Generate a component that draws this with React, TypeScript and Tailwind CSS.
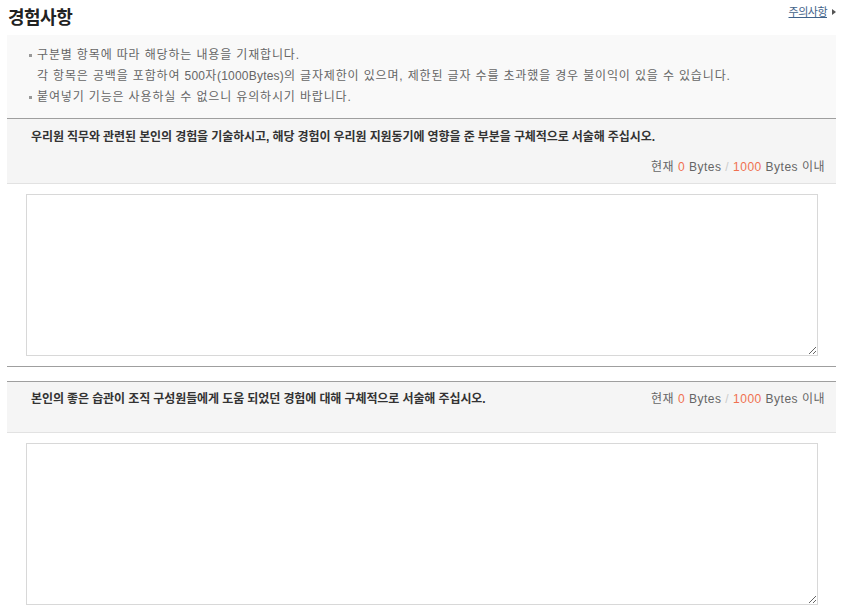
import type { ReactNode } from "react";

const FONT = "font-['Liberation_Sans','Noto_Sans_CJK_KR',sans-serif]";

const notices: { lines: ReactNode[] }[] = [
  {
    lines: [
      "구분별 항목에 따라 해당하는 내용을 기재합니다.",
      <>
        각 항목은 공백을 포함하여{" "}
        <span className="tracking-[0.2px]">500</span>자
        <span className="tracking-[0.2px]">(1000Bytes)</span>의 글자제한이 있으며, 제한된 글자 수를 초과했을 경우 불이익이 있을 수 있습니다.
      </>,
    ],
  },
  { lines: ["붙여넣기 기능은 사용하실 수 없으니 유의하시기 바랍니다."] },
];

const questions = [
  {
    text: "우리원 직무와 관련된 본인의 경험을 기술하시고, 해당 경험이 우리원 지원동기에 영향을 준 부분을 구체적으로 서술해 주십시오.",
    stacked: true,
  },
  {
    text: "본인의 좋은 습관이 조직 구성원들에게 도움 되었던 경험에 대해 구체적으로 서술해 주십시오.",
    stacked: false,
  },
];

function ByteCounter() {
  return (
    <span className="whitespace-nowrap tracking-[0.5px] text-[#666]">
      현재 <span className="text-[#f0704f]">0</span> Bytes{" "}
      <span className="text-[#cccccc]">/</span>{" "}
      <span className="text-[#f0704f]">1000</span> Bytes 이내
    </span>
  );
}

function QuestionBlock({ text, stacked }: { text: string; stacked: boolean }) {
  return (
    <div className="border-y border-y-[#9f9f9f] pb-[10px]">
      <div
        className={
          stacked
            ? "bg-[#f5f5f5] border-b border-[#e2e2e2] pl-[24px] pr-[11px] pt-[10px] pb-[8px] text-[12px] leading-4"
            : "bg-[#f5f5f5] border-b border-[#e2e2e2] pl-[24px] pr-[11px] pt-[9px] pb-[11px] text-[12px] leading-4 flex justify-between items-start"
        }
      >
        <p className="mb-[14px] h-4 font-semibold tracking-[-0.1px] text-[#333]">{text}</p>
        <div className={stacked ? "h-4 text-right" : "h-4"}>
          <ByteCounter />
        </div>
      </div>
      <div className="pt-[10px] pl-[19px]">
        <textarea className="block w-[792px] h-[162px] border border-[#d8d8d8] bg-white outline-none" />
      </div>
    </div>
  );
}

export default function App() {
  return (
    <div className={`${FONT} bg-white min-h-[612px]`}>
      <div className="ml-[7px] w-[829px]">
        <div className="h-[35px] flex justify-between items-start">
          <h2 className="pl-[1px] pt-[7px] text-[18px] leading-[22px] font-bold tracking-[-0.5px] text-[#222]">
            경험사항
          </h2>
          <div className="pt-[5px] flex items-center gap-[5px]">
            <a className="text-[11px] leading-[14px] tracking-[-0.5px] text-[#3f6289] underline">
              주의사항
            </a>
            <span className="w-0 h-0 border-y-[3px] border-y-transparent border-l-[4px] border-l-[#555]" />
          </div>
        </div>

        <ul className="bg-[#f9f9f9] pl-[22px] pt-[10px] pb-[10px] text-[12px] leading-[21px] tracking-[0.85px] text-[#666]">
          {notices.map((n, i) => (
            <li key={i} className="flex">
              <span className="w-[8px] flex-none pt-[9px]">
                <span className="block w-[3px] h-[3px] bg-[#999]" />
              </span>
              <div>
                {n.lines.map((l, j) => (
                  <div key={j}>{l}</div>
                ))}
              </div>
            </li>
          ))}
        </ul>

        <div className="flex flex-col gap-[14px]">
          {questions.map((q, i) => (
            <QuestionBlock key={i} text={q.text} stacked={q.stacked} />
          ))}
        </div>
      </div>
    </div>
  );
}
